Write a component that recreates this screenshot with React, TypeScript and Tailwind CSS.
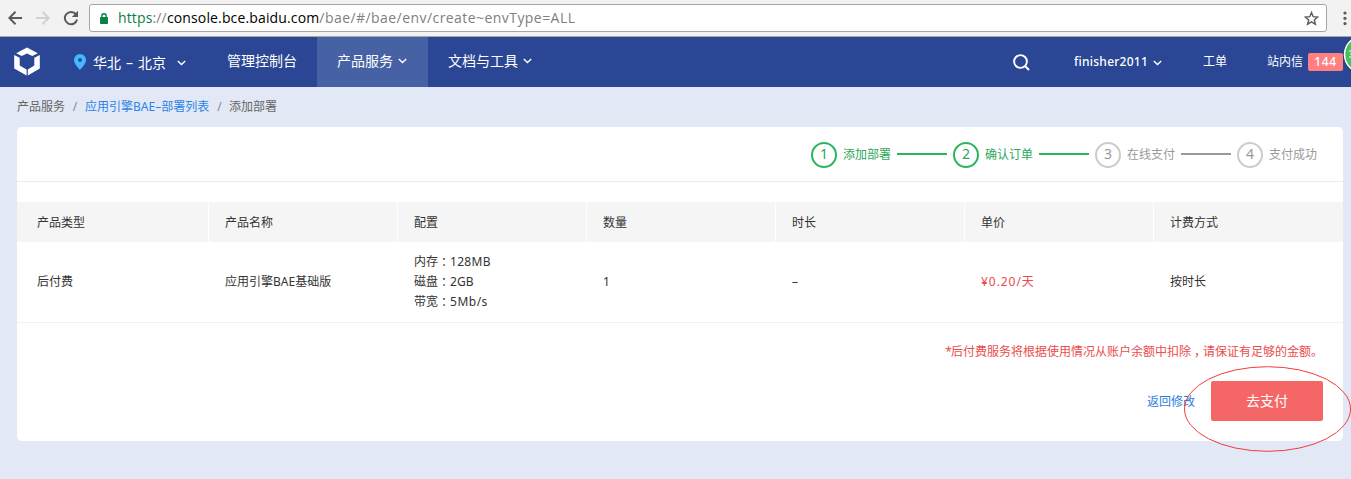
import React from "react";

function Chevron({ className = "" }: { className?: string }) {
  return (
    <svg className={className} width="9" height="6" viewBox="0 0 9 6" fill="none" stroke="currentColor" strokeWidth="1.4">
      <path d="M0.8 1L4.5 4.5L8.2 1" />
    </svg>
  );
}

function BrowserBar() {
  return (
    <div className="flex h-[37px] items-start border-b border-[#a9a9a9] bg-[#f2f2f2]">
      <svg className="mt-[10px] ml-[8px] shrink-0" width="14" height="16" viewBox="0 0 14 16" fill="none" stroke="#5a5a5a" strokeWidth="2">
        <path d="M14 8H1.5M7.5 1.8L1.4 8L7.5 14.2" />
      </svg>
      <svg className="mt-[10px] ml-[14px] shrink-0" width="14" height="16" viewBox="0 0 14 16" fill="none" stroke="#d2d2d2" strokeWidth="2">
        <path d="M0 8H12.5M6.5 1.8L12.6 8L6.5 14.2" />
      </svg>
      <svg className="mt-[10px] ml-[13px] shrink-0" width="16" height="16" viewBox="0 0 16 16">
        <path d="M13 4.3A6.2 6.2 0 1 0 14.1 9.6" fill="none" stroke="#5a5a5a" strokeWidth="2" />
        <path d="M15 0.8V7H8.8Z" fill="#5a5a5a" />
      </svg>
      <div className="mt-[4px] ml-[10px] flex h-[28px] w-[1238px] shrink-0 items-center rounded-[3px] border border-[#a6a6a6] bg-white pr-[7px] pl-[10px]">
        <svg width="8" height="11" viewBox="0 0 8 11" className="shrink-0">
          <path d="M1.8 5V3a2.2 2.2 0 0 1 4.4 0v2" fill="none" stroke="#0b8043" strokeWidth="1.4" />
          <rect y="4" width="8" height="7" rx="0.8" fill="#0b8043" />
        </svg>
        <div className="ml-[10px] flex-1 whitespace-nowrap font-['Open_Sans','Noto_Sans',sans-serif] text-[14px] leading-[20px] tracking-[0.14px] text-[#808080]">
          <span className="text-[#0b8043]">https</span>://<span className="text-black">console.bce.baidu.com</span>
          <span className="tracking-[0.44px]">/bae/#/bae/env/create~envType=ALL</span>
        </div>
        <svg width="15" height="15" viewBox="0 0 15 15" fill="none" stroke="#5a5a5a" strokeWidth="1.4">
          <path d="M7.5 1.6L9.2 5.7L13.7 6L10.3 8.9L11.4 13.3L7.5 10.9L3.6 13.3L4.7 8.9L1.3 6L5.8 5.7Z" />
        </svg>
      </div>
      <svg className="mt-[11px] ml-[16px] shrink-0" width="4" height="15" viewBox="0 0 4 15" fill="#5a5a5a">
        <circle cx="2" cy="2" r="1.6" />
        <circle cx="2" cy="7.3" r="1.6" />
        <circle cx="2" cy="12.6" r="1.6" />
      </svg>
    </div>
  );
}

function Header() {
  return (
    <header className="flex h-[50px] bg-[#2a4694] text-[14px] leading-[20px] whitespace-nowrap text-white">
      <svg className="mt-[10px] ml-[14px] shrink-0" width="26" height="29" viewBox="0 0 26 29" fill="#fff">
        <path d="M13 0.5L23.8 6.2L18.3 9L13 6.6L7.7 9L2.2 6.2Z" />
        <path d="M0.2 8L5.7 10.8V18.6L12.6 22.6V28.6L0.2 21.6Z" />
        <path d="M25.8 8L20.3 10.8V18.6L13.8 22.6V28.6L25.8 21.6Z" />
      </svg>
      <div className="ml-[34px] flex w-[133px] items-center">
        <svg width="12" height="16" viewBox="0 0 12 16" className="shrink-0">
          <path d="M6 0A6 6 0 0 0 0 6C0 9.5 3.5 13 6 16C8.500 13 12 9.500 12 6A6 6 0 0 0 6 0Z" fill="#42b9ff" />
          <circle cx="6" cy="6" r="1.9" fill="#2a4694" />
        </svg>
        <span className="ml-[7px] w-[73px] pt-[2px] [word-spacing:1.3px]">华北 – 北京</span>
        <Chevron className="mt-[2px] ml-[11px]" />
      </div>
      <div className="ml-[20px] flex w-[90px] items-center pb-[2px]">管理控制台</div>
      <div className="flex w-[111px] items-center bg-[#4662a5] pb-[2px] pl-[20px]">
        产品服务
        <Chevron className="ml-[5px]" />
      </div>
      <div className="flex w-[585px] items-center pb-[2px] pl-[20px]">
        文档与工具
        <Chevron className="ml-[5px]" />
      </div>
      <div className="flex w-[61px] items-center">
        <svg width="17" height="17" viewBox="0 0 17 17" fill="none" stroke="#fff" strokeWidth="1.9">
          <circle cx="7.500" cy="7.500" r="6.400" />
          <path d="M12 12L16 16" />
        </svg>
      </div>
      <div className="flex w-[129px] items-center text-[12px]">
        <span className="w-[75px] font-medium tracking-[0.25px]">finisher2011</span>
        <Chevron className="mt-[2px] ml-[4px]" />
      </div>
      <div className="flex w-[64px] items-center text-[12px]">工单</div>
      <div className="flex items-center text-[12px]">
        站内信
        <span className="ml-[5px] h-[18px] w-[35px] rounded-[2px] bg-[#ff8080] text-center leading-[18px] font-medium tracking-[0.7px]">144</span>
      </div>
    </header>
  );
}

const steps = [
  { label: "添加部署", done: true },
  { label: "确认订单", done: true },
  { label: "在线支付", done: false },
  { label: "支付成功", done: false },
];

function Steps() {
  return (
    <div className="flex h-[55px] items-center justify-end border-b border-[#ebebeb] pr-[26px]">
      {steps.map((s, i) => (
        <div key={s.label} className={s.done ? "flex items-center text-[#2ea75a]" : "flex items-center text-[#999]"}>
          <span
            className={
              s.done
                ? "mt-[2px] flex h-[26px] w-[26px] items-center justify-center rounded-full border-2 border-[#2db55d] pb-[2px] text-[14px] leading-none"
                : "mt-[2px] flex h-[26px] w-[26px] items-center justify-center rounded-full border-2 border-[#ccc] pb-[2px] text-[14px] leading-none"
            }
          >
            {i + 1}
          </span>
          <span className="ml-[6px] w-[48px] pt-[2px]">{s.label}</span>
          {i < 3 && <span className={s.done ? "mx-[6px] h-[2px] w-[50px] bg-[#2db55d]" : "mx-[6px] h-[2px] w-[50px] bg-[#999]"} />}
        </div>
      ))}
    </div>
  );
}

const headings = ["产品类型", "产品名称", "配置", "数量", "时长", "单价", "计费方式"];

// Half-width punctuation glyph centred in a full-width cell.
function Mark({ children }: { children: string }) {
  return <span className="px-[3px] [font-feature-settings:'halt']">{children}</span>;
}

function OrderTable() {
  return (
    <div className="mt-[20px] text-[#333]">
      <div className="grid h-[40px] grid-cols-[192px_repeat(6,189px)] bg-[#f5f5f5]">
        {headings.map((h) => (
          <div key={h} className="flex items-center border-r border-white pt-px pl-[16px] first:pl-[20px] last:border-r-0">
            {h}
          </div>
        ))}
      </div>
      <div className="grid h-[81px] grid-cols-[192px_repeat(6,189px)] items-center border-b border-[#f2f2f2] leading-[20px]">
        <div className="pl-[20px]">后付费</div>
        <div className="pl-[16px]">应用引擎BAE基础版</div>
        <div className="pl-[16px]">
          <div>内存<Mark>：</Mark><span className="tracking-[0.3px]">128MB</span></div>
          <div>磁盘<Mark>：</Mark><span>2GB</span></div>
          <div>带宽<Mark>：</Mark><span className="tracking-[0.5px]">5Mb/s</span></div>
        </div>
        <div className="pl-[16px]">1</div>
        <div className="pl-[16px]">–</div>
        <div className="pl-[16px] tracking-[0.95px] text-[#ea4b4b]">¥0.20/天</div>
        <div className="pl-[16px]">按时长</div>
      </div>
    </div>
  );
}

export default function App() {
  return (
    <div className="relative h-[479px] w-[1351px] overflow-hidden bg-[#e2e8f5] font-['Noto_Sans','Noto_Sans_CJK_SC',sans-serif] text-[12px]">
      <BrowserBar />
      <Header />
      <nav className="flex h-[40px] items-center pl-[17px] text-[#666]">
        <span>产品服务</span>
        <span className="w-[20px] text-center text-[#888]">/</span>
        <a className="w-[125px] text-[#2d84e8]">应用引擎BAE–部署列表</a>
        <span className="w-[19px] text-center text-[#888]">/</span>
        <span>添加部署</span>
      </nav>
      <main className="ml-[17px] h-[314px] w-[1326px] rounded-[5px] bg-white">
        <Steps />
        <OrderTable />
        <p className="mt-[19px] mr-[20px] text-right leading-[20px] text-[#ea4b4b]">
          <span className="tracking-[-1px]">*</span>后付费服务将根据使用情况从账户余额中扣除<Mark>，</Mark>请保证有足够的金额。
        </p>
        <div className="mt-[19px] mr-[20px] flex items-center justify-end">
          <a className="pt-[2px] text-[#2d7ddd]">返回修改</a>
          <button className="ml-[16px] h-[40px] w-[112px] rounded-[2px] bg-[#f56767] pb-[2px] text-[14px] text-white">去支付</button>
        </div>
      </main>
      <svg className="absolute top-[365px] left-[1183px]" width="168" height="88" viewBox="0 0 168 88" fill="none" stroke="#f43b3b">
        <ellipse cx="84.500" cy="44" rx="83" ry="42.300" />
      </svg>
      <svg className="absolute top-[34px] left-[1339px]" width="12" height="44" viewBox="0 0 12 44">
        <circle cx="24" cy="21" r="20" fill="#333" fillOpacity="0.45" />
        <circle cx="24" cy="20.500" r="18.500" fill="#42c463" stroke="#fff" strokeWidth="1.500" />
        <path d="M10 17h2M11 20h1M10 23h2" stroke="#fff" />
      </svg>
    </div>
  );
}
